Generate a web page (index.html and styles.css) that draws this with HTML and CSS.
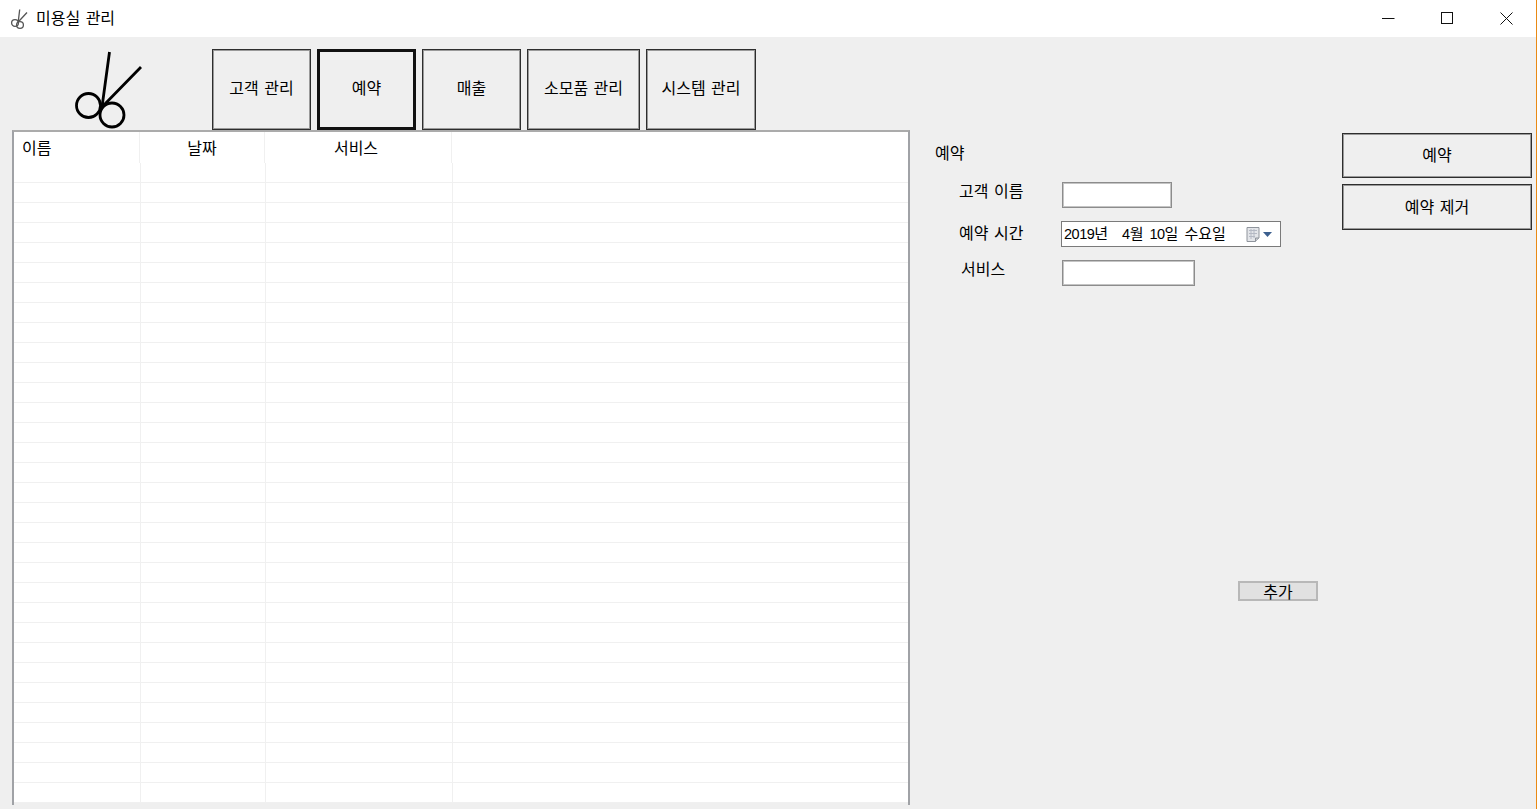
FILE: index.html
```html
<!DOCTYPE html>
<html lang="ko">
<head>
<meta charset="utf-8">
<title>미용실 관리</title>
<link rel="stylesheet" href="styles.css">
</head>
<body>
<div class="window">
  <header class="titlebar">
    <svg class="app-icon" width="20" height="22" viewBox="0 0 20 22">
      <g fill="none" stroke="#555" stroke-width="1.3">
        <path d="M9.7 1.5 8.2 14M17 4.500 8.200 14"/>
        <circle cx="5" cy="15" r="3.400"/>
        <circle cx="10" cy="17" r="3.400"/>
      </g>
    </svg>
    <span class="app-title">미용실 관리</span>
    <div class="win-controls">
      <span class="win-btn"><svg width="13" height="13" viewBox="0 0 13 13"><path d="M0 6.500h12.500" stroke="#111" fill="none"/></svg></span>
      <span class="win-btn"><svg width="13" height="13" viewBox="0 0 13 13"><rect x=".5" y=".5" width="11" height="11" stroke="#111" fill="none"/></svg></span>
      <span class="win-btn"><svg width="13" height="13" viewBox="0 0 13 13"><path d="M.5.500l12 12M12.500.500l-12 12" stroke="#111" fill="none"/></svg></span>
    </div>
  </header>

  <nav class="toolbar">
    <svg class="logo" width="76" height="82" viewBox="70 49 76 82">
      <g fill="none" stroke="#000" stroke-width="2.800">
        <path d="M109.500 52 102 107 141 67"/>
        <circle cx="88.500" cy="105.500" r="12"/>
        <circle cx="112" cy="115" r="12"/>
      </g>
    </svg>
    <button class="tool-btn w99">고객 관리</button>
    <button class="tool-btn w99 active">예약</button>
    <button class="tool-btn w99">매출</button>
    <button class="tool-btn w113">소모품 관리</button>
    <button class="tool-btn w110">시스템 관리</button>
  </nav>

  <main class="content">
    <section class="list">
      <div class="list-head">
        <span class="col c1 left">이름</span>
        <span class="col c2">날짜</span>
        <span class="col c3">서비스</span>
      </div>
      <div class="list-body">
        <div class="row"><i></i><i></i><i></i></div><div class="row"><i></i><i></i><i></i></div>
        <div class="row"><i></i><i></i><i></i></div><div class="row"><i></i><i></i><i></i></div>
        <div class="row"><i></i><i></i><i></i></div><div class="row"><i></i><i></i><i></i></div>
        <div class="row"><i></i><i></i><i></i></div><div class="row"><i></i><i></i><i></i></div>
        <div class="row"><i></i><i></i><i></i></div><div class="row"><i></i><i></i><i></i></div>
        <div class="row"><i></i><i></i><i></i></div><div class="row"><i></i><i></i><i></i></div>
        <div class="row"><i></i><i></i><i></i></div><div class="row"><i></i><i></i><i></i></div>
        <div class="row"><i></i><i></i><i></i></div><div class="row"><i></i><i></i><i></i></div>
        <div class="row"><i></i><i></i><i></i></div><div class="row"><i></i><i></i><i></i></div>
        <div class="row"><i></i><i></i><i></i></div><div class="row"><i></i><i></i><i></i></div>
        <div class="row"><i></i><i></i><i></i></div><div class="row"><i></i><i></i><i></i></div>
        <div class="row"><i></i><i></i><i></i></div><div class="row"><i></i><i></i><i></i></div>
        <div class="row"><i></i><i></i><i></i></div><div class="row"><i></i><i></i><i></i></div>
        <div class="row"><i></i><i></i><i></i></div><div class="row"><i></i><i></i><i></i></div>
        <div class="row"><i></i><i></i><i></i></div><div class="row"><i></i><i></i><i></i></div>
        <div class="row"><i></i><i></i><i></i></div><div class="row"><i></i><i></i><i></i></div>
      </div>
    </section>

    <section class="form">
      <h2 class="form-title">예약</h2>
      <div class="form-grid">
        <label class="lbl lbl-name">고객 이름</label>
        <input class="field f-name" type="text">
        <label class="lbl lbl-time">예약 시간</label>
        <div class="date">
          <span class="date-text"><span class="num">2019</span>년<span class="gap-a"></span><span class="num">4</span>월<span class="gap-b"></span><span class="num">10</span>일<span class="gap-c"></span>수요일</span>
          <svg class="cal" width="15" height="17" viewBox="0 0 15 17">
            <path d="M1 1.500h12v10.500l-3.500 3.500h-8.500z" fill="#e3e5e9" stroke="#8f949c"/>
            <path d="M9.500 15.500v-3.500h3.500" fill="#c9ccd2" stroke="#8f949c"/>
            <path d="M3 4.500h8M3 7.500h8M3 10.500h6M5 3v10M8 3v9" stroke="#b4b9c4" fill="none"/>
          </svg>
          <svg class="caret" width="9" height="5" viewBox="0 0 9 5"><path d="M0 0h9L4.500 5z" fill="#3c5f8e"/></svg>
        </div>
        <label class="lbl lbl-svc">서비스</label>
        <input class="field f-svc" type="text">
      </div>
      <button class="add-btn">추가</button>
    </section>

    <aside class="side">
      <button class="side-btn first">예약</button>
      <button class="side-btn second">예약 제거</button>
    </aside>
  </main>
</div>
</body>
</html>
```
FILE: styles.css
```css
* { box-sizing: border-box; }
html, body { margin: 0; height: 100%; }
body {
  width: 1537px;
  height: 809px;
  overflow: hidden;
  background: #efefef;
  border-right: 1px solid #e98a15;
  font-family: "Noto Sans CJK KR", "Noto Sans", sans-serif;
  font-size: 16px;
  word-spacing: 1px;
  color: #000;
}
.window { display: flex; flex-direction: column; height: 809px; }

.titlebar {
  display: flex;
  align-items: center;
  height: 37px;
  flex: none;
  background: #fff;
  padding-left: 10px;
}
.app-icon { flex: none; margin-top: 1px; }
.app-title { margin-left: 6px; font-size: 16px; line-height: 20px; margin-top: -3px; }
.win-controls { display: flex; margin-left: auto; height: 37px; }
.win-btn { width: 59px; display: flex; align-items: center; justify-content: center; }

.toolbar {
  display: flex;
  flex: none;
  height: 94px;
  padding: 12px 0 0 70px;
}
.logo { flex: none; margin-right: 66px; }
.tool-btn {
  height: 81px;
  margin-right: 6px;
  padding: 0 0 5px;
  background: #efefef;
  border: 1px solid #2e2e2e;
  box-shadow: inset 0 0 0 1px #9a9a9a;
  font: inherit;
  word-spacing: 1px;
  color: #000;
}
.tool-btn.active { border: 3px solid #111; box-shadow: none; }
.w99 { width: 99px; }
.w113 { width: 113px; }
.w110 { width: 110px; }

.content { display: flex; flex: 1; min-height: 0; }

.list {
  flex: none;
  width: 898px;
  height: 675px;
  margin: -1px 0 0 12px;
  border: 2px solid #a0a2a6;
  border-top-color: #ababab;
  border-bottom: 0;
  display: flex;
  flex-direction: column;
}
.list-head { display: flex; flex: none; height: 31px; background: #fff; }
.col {
  height: 31px;
  line-height: 30px;
  text-align: center;
  border-right: 1px solid #f0f0f0;
}
.col.c1 { width: 126px; }
.col.c2 { width: 125px; }
.col.c3 { width: 187px; padding-right: 4px; }
.col.left { text-align: left; padding-left: 8px; }
.list-body { background: #fff; }
.row {
  display: flex;
  height: 20px;
  border-bottom: 1px solid #f0f0f0;
}
.row i { display: block; height: 20px; border-right: 1px solid #f0f0f0; }
.row i:nth-child(1) { width: 127px; }
.row i:nth-child(2) { width: 125px; }
.row i:nth-child(3) { width: 187px; }

.form {
  flex: none;
  width: 383px;
  margin-left: 25px;
  display: flex;
  flex-direction: column;
}
.form-title {
  margin: 11px 0 0;
  font-size: 16px;
  font-weight: 400;
  line-height: 20px;
  height: 40px;
}
.form-grid {
  display: grid;
  grid-template-columns: 127px 1fr;
  row-gap: 13px;
  align-items: start;
}
.lbl { padding-left: 24px; line-height: 20px; }
.lbl-name { margin-top: -2px; }
.lbl-time { margin-top: 1px; }
.lbl-svc { padding-left: 26px; margin-top: -2px; }
.field {
  display: block;
  height: 26px;
  padding: 0;
  background: #fff;
  border: 1px solid #8c8c8c;
  box-shadow: inset 0 0 0 1px #c4c4c4;
  border-radius: 0;
}
.f-name { width: 110px; }
.f-svc { width: 133px; }
.date {
  display: flex;
  align-items: center;
  width: 220px;
  height: 26px;
  margin-left: -1px;
  padding-left: 2px;
  background: #fff;
  border: 1px solid #7a7a7a;
  line-height: 22px;
  font-size: 15px;
}
.date-text { width: 182px; white-space: nowrap; padding-bottom: 2px; }
.num { font-family: "Liberation Sans", sans-serif; font-size: 14.5px; letter-spacing: -0.5px; }
.gap-a { display: inline-block; width: 14px; }
.gap-b { display: inline-block; width: 6px; }
.gap-c { display: inline-block; width: 6px; }
.cal { flex: none; }
.caret { flex: none; margin-left: 2px; }
.add-btn {
  align-self: flex-end;
  width: 80px;
  height: 20px;
  margin-top: 295px;
  padding: 0 0 2px;
  background: #e1e1e1;
  border: 2px solid #b8b8b8;
  font: inherit;
  line-height: 16px;
  color: #000;
}

.side { flex: none; width: 190px; margin-left: 24px; padding-top: 2px; display: flex; flex-direction: column; }
.side-btn {
  width: 190px;
  background: #efefef;
  border: 1px solid #2e2e2e;
  box-shadow: inset 0 0 0 1px #9a9a9a;
  font: inherit;
  word-spacing: 1px;
  color: #000;
  padding: 0 0 3px;
}
.side-btn.first { height: 45px; }
.side-btn.second { height: 46px; margin-top: 6px; }
```
